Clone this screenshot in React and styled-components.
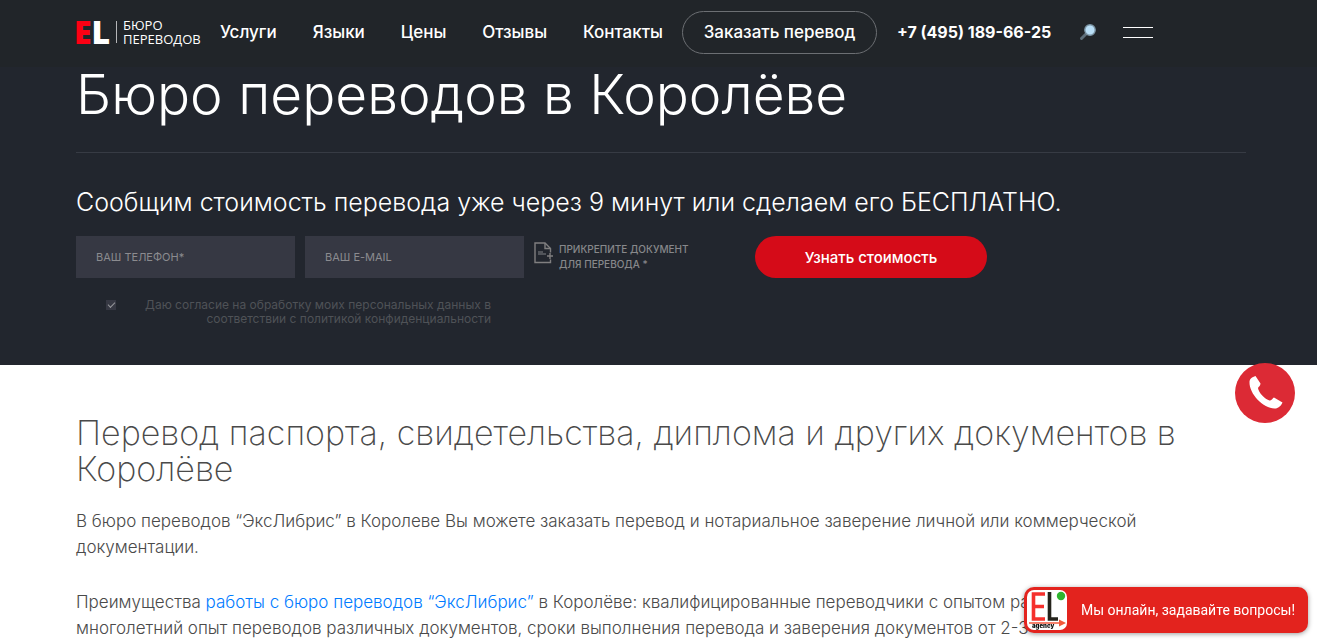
import React, { useState } from "react";
import styled, { createGlobalStyle } from "styled-components";

const App = () => {
  const [agree, setAgree] = useState(true);

  return (
    <>
      <GlobalStyle />
      <Header>
        <Logo href="#" aria-label="БЮРО ПЕРЕВОДОВ">
          <LogoMark><span>E</span>L</LogoMark>
          <LogoText>БЮРО<br />ПЕРЕВОДОВ</LogoText>
        </Logo>
        <Nav>
          <NavLink href="#">Услуги</NavLink>
          <NavLink href="#">Языки</NavLink>
          <NavLink href="#">Цены</NavLink>
          <NavLink href="#">Отзывы</NavLink>
          <NavLink href="#">Контакты</NavLink>
        </Nav>
        <OrderButton type="button">Заказать перевод</OrderButton>
        <Phone href="tel:+74951896625">+7 (495) 189-66-25</Phone>
        <SearchButton type="button" aria-label="Поиск">
          <svg width="18" height="18" viewBox="0 0 18 18">
            <path d="M2.5 15.5 L7 11" stroke="#5d6e7a" strokeWidth="3" strokeLinecap="round" />
            <circle cx="11" cy="7" r="5.2" fill="#b9dff7" stroke="#7c95a5" strokeWidth="1.4" />
          </svg>
        </SearchButton>
        <Burger type="button" aria-label="Меню">
          <span />
          <span />
        </Burger>
      </Header>

      <Hero>
        <Title>Бюро переводов в Королёве</Title>
        <Lead>Сообщим стоимость перевода уже через 9 минут или сделаем его БЕСПЛАТНО.</Lead>
        <Form onSubmit={(e) => e.preventDefault()}>
          <Field type="tel" placeholder="ВАШ ТЕЛЕФОН*" aria-label="ВАШ ТЕЛЕФОН*" />
          <Field type="email" placeholder="ВАШ E-MAIL" aria-label="ВАШ E-MAIL" />
          <Attach type="button">
            <svg width="20" height="22" viewBox="0 0 20 22" fill="none" stroke="#807f80" strokeWidth="1.4">
              <path d="M16.5 10.5 V6.5 L11 1 H1 V20.5 H16.5 V17.5" />
              <path d="M11 1 V6.5 H16.5" />
              <path d="M16 11 V17 M13 14 H19" />
              <path d="M4 10 H9 M4 12 H12" stroke="#62646a" />
            </svg>
            <span>ПРИКРЕПИТЕ ДОКУМЕНТ<br />ДЛЯ ПЕРЕВОДА *</span>
          </Attach>
          <Submit type="submit">Узнать стоимость</Submit>
        </Form>
        <Agree>
          <input type="checkbox" checked={agree} onChange={() => setAgree(!agree)} />
          <span>Даю согласие на обработку моих персональных данных в<br />соответствии с политикой конфиденциальности</span>
        </Agree>
      </Hero>

      <Content>
        <Heading>Перевод паспорта, свидетельства, диплома и других документов в Королёве</Heading>
        <Text>
          В бюро переводов “ЭксЛибрис” в Королеве Вы можете заказать перевод и нотариальное заверение личной или коммерческой<br />документации.
        </Text>
        <Text>
          Преимущества <a href="#">работы с бюро переводов “ЭксЛибрис”</a> в Королёве: квалифицированные переводчики с опытом ра<br />
          многолетний опыт переводов различных документов, сроки выполнения перевода и заверения документов от 2-3
        </Text>
      </Content>

      <CallButton type="button" aria-label="Позвонить">
        <svg width="36" height="36" viewBox="0 0 36 36" fill="#fff">
          <path d="M2.500 7 C2.500 4 5 2 8.500 1 L13.500 8.500 C13.500 11 11.500 11.500 11 13 C11.500 17.500 18 24.500 22.500 25.500 C25 25.500 25.500 23 27 22.500 L35.500 27.500 C34 31 31 33.500 28 33.500 C17 34 2 19 2.500 7 Z" />
        </svg>
      </CallButton>

      <Chat type="button">
        <svg width="40" height="40" viewBox="0 0 40 40">
          <rect width="40" height="40" rx="7" fill="#fff" />
          <path d="M18 4 H6.500 V29 H18 M6.500 16.500 H17" fill="none" stroke="#f5302d" strokeWidth="3.600" />
          <path d="M22.500 2 V29 H31" fill="none" stroke="#25231b" strokeWidth="3.600" />
          <path d="M2 33 H33" stroke="#f2593c" strokeWidth="1.500" />
          <path d="M32 29.500 L39 33 L32 36.500 Z" fill="#f2593c" />
          <circle cx="34" cy="6" r="4.200" fill="#2fb52f" />
          <text x="5" y="38" fontFamily="Inter, sans-serif" fontSize="6" fontWeight="900" fill="#111">agency</text>
        </svg>
        <span>Мы онлайн, задавайте вопросы!</span>
      </Chat>
    </>
  );
};

export default App;

const GlobalStyle = createGlobalStyle`
  * {
    box-sizing: border-box;
  }
  body {
    margin: 0;
    background: #fff;
    font-family: Inter, "Noto Sans", sans-serif;
    overflow-x: hidden;
  }
  button {
    font-family: inherit;
    cursor: pointer;
    padding: 0;
    border: 0;
    background: none;
  }
  a {
    text-decoration: none;
  }
`;

const Header = styled.header`
  position: sticky;
  top: 0;
  z-index: 2;
  display: flex;
  align-items: center;
  height: 67px;
  padding: 0 74px 3px;
  background: #212529;
  white-space: nowrap;
`;

const Logo = styled.a`
  display: flex;
  align-items: center;
  flex: 0 0 146px;
  color: #fff;
`;

const LogoMark = styled.span`
  width: 43px;
  height: 22px;
  border-right: 1px solid #b5b6b8;
  font: 800 32px/22px "Open Sans", sans-serif;
  span {
    color: #fd0013;
  }
`;

const LogoText = styled.span`
  margin-left: 6px;
  font: 400 13px/14px "Open Sans", sans-serif;
`;

const Nav = styled.nav`
  display: flex;
  justify-content: space-between;
  flex: 0 0 443px;
`;

const NavLink = styled.a`
  color: #fff;
  font-size: 17px;
  font-weight: 500;
`;

const OrderButton = styled.button`
  flex: 0 0 195px;
  height: 43px;
  margin-left: 19px;
  border: 1px solid #6c6f73;
  border-radius: 22px;
  color: #fff;
  font-size: 17px;
  font-weight: 500;
`;

const Phone = styled.a`
  flex: 0 0 156px;
  margin-left: 20px;
  color: #fff;
  font-size: 16px;
  font-weight: 700;
`;

const SearchButton = styled.button`
  height: 18px;
  margin-left: 26px;
`;

const Burger = styled.button`
  display: flex;
  flex-direction: column;
  gap: 9px;
  width: 30px;
  margin-left: 26px;
  span {
    height: 1px;
    background: #fff;
  }
`;

const Hero = styled.section`
  padding: 0 71px 39px 76px;
  background: #22262e;
  color: #fff;
`;

const Title = styled.h1`
  height: 86px;
  margin: 0;
  border-bottom: 1px solid #373b44;
  font-size: 55px;
  font-weight: 300;
  line-height: 54px;
  white-space: nowrap;
`;

const Lead = styled.p`
  margin: 33px 0 17px;
  font-size: 25px;
  font-weight: 300;
  line-height: 33px;
  white-space: nowrap;
`;

const Form = styled.form`
  display: flex;
`;

const Field = styled.input`
  width: 219px;
  height: 42px;
  margin-right: 10px;
  padding: 0 20px;
  border: 0;
  background: #363843;
  color: #fff;
  font-family: inherit;
  font-size: 11px;
  &::placeholder {
    color: #8b8b8f;
    opacity: 1;
  }
`;

const Attach = styled.button`
  display: flex;
  gap: 5px;
  width: 221px;
  padding-top: 6px;
  color: #87888b;
  font-size: 10px;
  font-weight: 500;
  line-height: 15px;
  text-align: left;
`;

const Submit = styled.button`
  width: 232px;
  height: 42px;
  border-radius: 21px;
  background: #d50b18;
  color: #fff;
  font-size: 15px;
  font-weight: 500;
`;

const Agree = styled.label`
  display: flex;
  justify-content: space-between;
  width: 385px;
  margin: 20px 0 0 30px;
  color: #4f5257;
  font-size: 12px;
  font-weight: 400;
  line-height: 14px;
  text-align: right;
  input {
    appearance: none;
    width: 10px;
    height: 10px;
    margin: 2px 0 0;
    background: #363843;
  }
  input:checked::after {
    content: "";
    display: block;
    width: 6px;
    height: 3px;
    margin: 2px;
    border: solid #96979b;
    border-width: 0 0 1px 1px;
    transform: rotate(-45deg);
  }
`;

const Content = styled.main`
  padding: 50px 71px 0 76px;
  color: #4a4a4a;
`;

const Heading = styled.h2`
  margin: 0 0 21px;
  font-size: 34px;
  font-weight: 200;
  line-height: 36px;
`;

const Text = styled.p`
  margin: 0 0 29px;
  font-size: 17px;
  font-weight: 300;
  line-height: 26px;
  white-space: nowrap;
  a {
    color: #007bff;
  }
`;

const CallButton = styled.button`
  position: fixed;
  top: 363px;
  right: 22px;
  z-index: 3;
  display: grid;
  place-items: center;
  width: 60px;
  height: 60px;
  border-radius: 50%;
  background: #dc2a35;
`;

const Chat = styled.button`
  position: fixed;
  right: 9px;
  bottom: 8px;
  z-index: 3;
  display: flex;
  align-items: center;
  gap: 14px;
  width: 284px;
  height: 46px;
  padding-left: 3px;
  border-radius: 10px;
  background: #e3231e;
  box-shadow: 0 1px 5px rgba(0, 0, 0, 0.4);
  color: #fff;
  font-family: Roboto, sans-serif;
  font-size: 14px;
  white-space: nowrap;
`;
